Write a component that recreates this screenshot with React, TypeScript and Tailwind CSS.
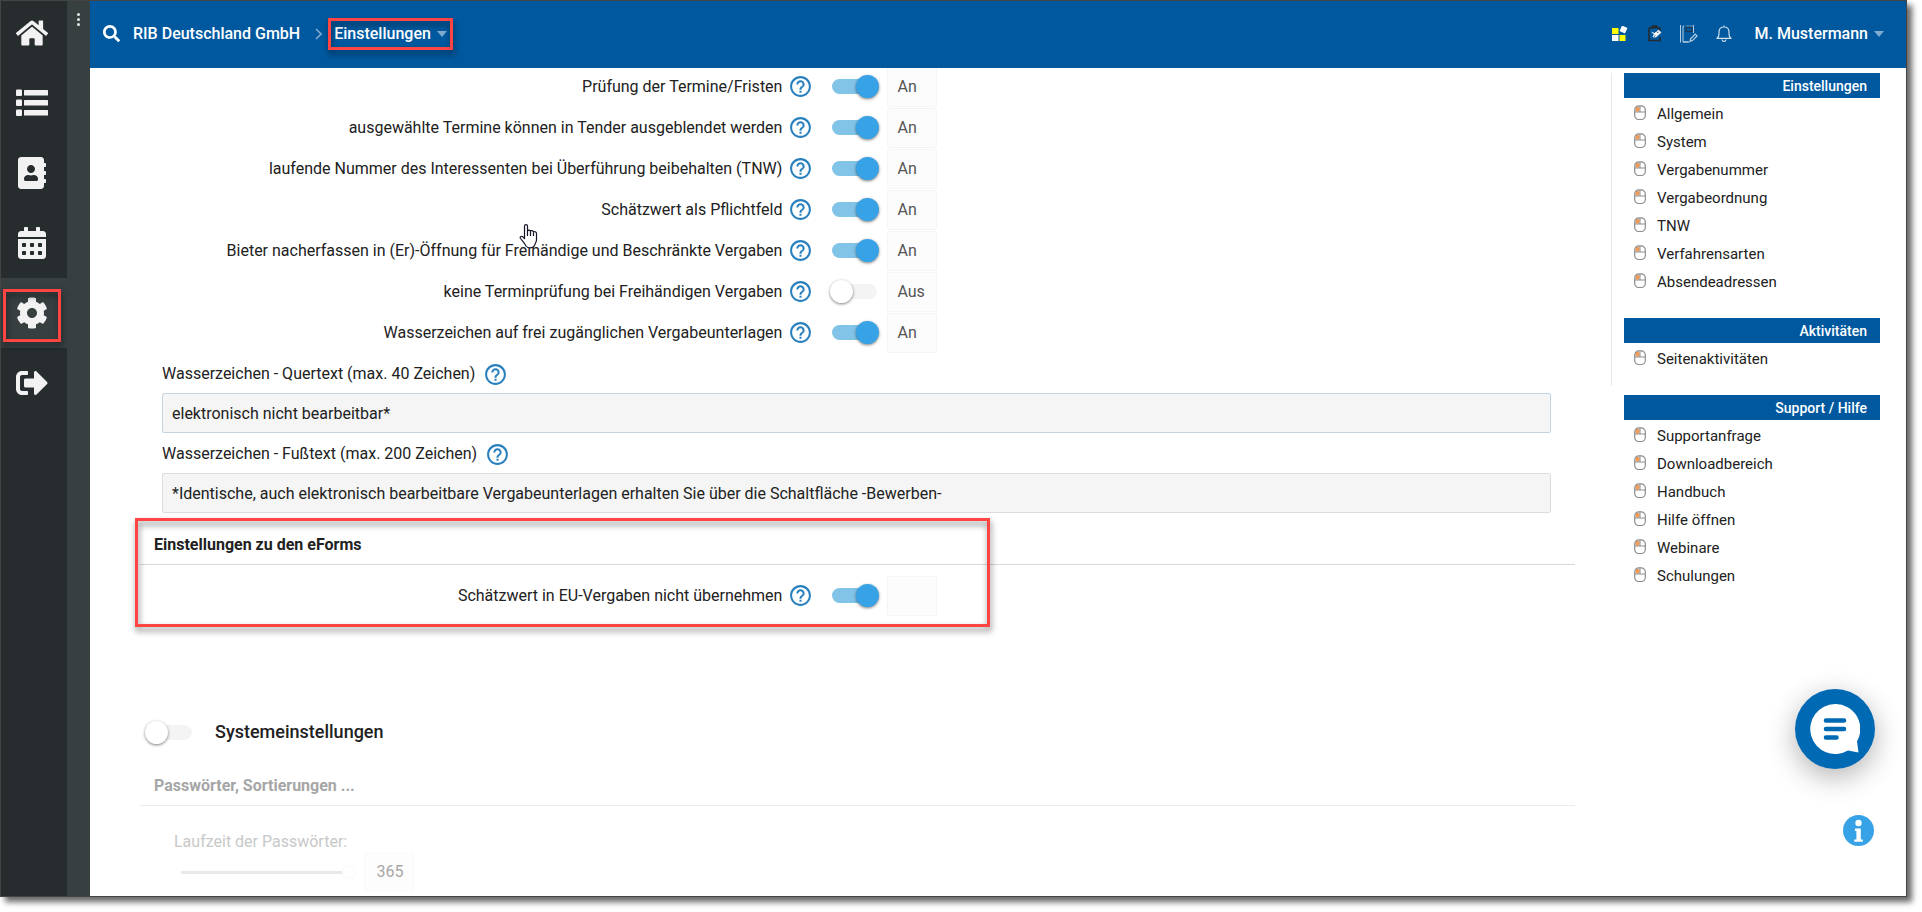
import type { ReactNode } from 'react'
import { FaAddressBook, FaCalendarAlt, FaCog, FaHome, FaSearch, FaSignOutAlt } from 'react-icons/fa'
import { MdHelpOutline } from 'react-icons/md'

type Setting = { id: string; label: string; on: boolean; value: string }

const SETTINGS: Setting[] = [
  { id: 'fristen', label: 'Prüfung der Termine/Fristen', on: true, value: 'An' },
  { id: 'ausblenden', label: 'ausgewählte Termine können in Tender ausgeblendet werden', on: true, value: 'An' },
  { id: 'tnw', label: 'laufende Nummer des Interessenten bei Überführung beibehalten (TNW)', on: true, value: 'An' },
  { id: 'pflicht', label: 'Schätzwert als Pflichtfeld', on: true, value: 'An' },
  { id: 'bieter', label: 'Bieter nacherfassen in (Er)-Öffnung für Freihändige und Beschränkte Vergaben', on: true, value: 'An' },
  { id: 'terminpruefung', label: 'keine Terminprüfung bei Freihändigen Vergaben', on: false, value: 'Aus' },
  { id: 'wasserzeichen', label: 'Wasserzeichen auf frei zugänglichen Vergabeunterlagen', on: true, value: 'An' },
]

const MENU_SETTINGS = ['Allgemein', 'System', 'Vergabenummer', 'Vergabeordnung', 'TNW', 'Verfahrensarten', 'Absendeadressen']
const MENU_SUPPORT = ['Supportanfrage', 'Downloadbereich', 'Handbuch', 'Hilfe öffnen', 'Webinare', 'Schulungen']

function ListIcon() {
  return (
    <svg width="32" height="32" viewBox="0 0 32 32" fill="currentColor">
      {[3, 13, 23].map((y) => (
        <g key={y}>
          <rect x="0" y={y - 0.5} width="6" height="6.5" rx="1" />
          <rect x="8" y={y} width="24" height="5.5" rx="0.5" />
        </g>
      ))}
    </svg>
  )
}

function Caret() {
  return (
    <svg width="10" height="6" viewBox="0 0 10 6" fill="#80aad0">
      <path d="M0 0h10L5 6z" />
    </svg>
  )
}

function MouseIcon() {
  return (
    <svg className="mb-0.5" width="12" height="16" viewBox="0 0 12 16" fill="none" stroke="#8d8d8d">
      <path d="M1.500 2h4v4.500h-4z" fill="#f59a50" stroke="none" />
      <rect x="0.700" y="0.900" width="10.600" height="13.600" rx="4" strokeWidth="1.200" />
      <path d="M.7 7h10.600M6 1v6" />
    </svg>
  )
}

function TilesIcon() {
  return (
    <svg width="16" height="16" viewBox="0 0 16 16">
      <rect x="0" y="2" width="6.500" height="6" fill="#ff0" />
      <rect x="0" y="9" width="6.500" height="6" fill="#fff" />
      <rect x="7.500" y="9" width="6" height="6" fill="#ff0" />
      <rect x="8.500" y="0.500" width="6" height="6" fill="#fff" transform="rotate(25 11.500 3.500)" />
    </svg>
  )
}

function ClipboardIcon() {
  return (
    <svg width="14" height="17" viewBox="0 0 14 17" fill="none">
      <path d="M1 3h2.500l1-2h4l1 2H12v3M12 12v3.500H1V3" fill="none" stroke="#252b33" strokeWidth="1.600" />
      <path d="M4 1h5l.5 2.500h-6z" fill="#252b33" />
      <path d="M3.500 7l2.500 2 1.500-1.500 1 1M5 12l1-2.500L10.500 5 13 7.500 8 12z" fill="#fff" stroke="#fff" strokeWidth="0.600" />
      <path d="M6 11.500l1.500-1M9 8l1.500-1" stroke="#252b33" strokeWidth="0.800" />
    </svg>
  )
}

function JournalIcon() {
  return (
    <svg width="18" height="18" viewBox="0 0 18 18" fill="none" stroke="#b9d0e4">
      <path d="M.5 0v17.500M3 1v16h5.500M3 17h6M3 1h1M13.500 0v8" />
      <rect x="6" y="2.500" width="6" height="4" stroke="#253545" />
      <path d="M5.500 1h8" stroke="#5f93c0" />
      <path d="M10 16.500l.6-2.700 4.600-4.700 1.800 1.800-4.600 4.700z" strokeWidth="1.200" />
    </svg>
  )
}

function BellIcon() {
  return (
    <svg width="16" height="18" viewBox="0 0 16 18" fill="none" stroke="#cfe0ee" strokeWidth="1.200">
      <path d="M8 .5v1.300M1 13.300h14c-1.600-1.200-2-2.600-2-4.300V7c0-3-2-5-5-5S3 4 3 7v2c0 1.700-.4 3.100-2 4.300z" strokeLinejoin="round" />
      <path d="M6 14.500c.2 1.300 1 2 2 2s1.800-.7 2-2" />
    </svg>
  )
}

/* red marker frame laid over the element it highlights */
function Marker({ className }: { className: string }) {
  return <span className={`pointer-events-none absolute border-3 border-[#ff4444] drop-shadow-[1px_4px_3px_rgba(0,0,0,0.5)] ${className}`} />
}

function NavItem({ label, children }: { label: string; children: ReactNode }) {
  return (
    <a href="#" aria-label={label} className="flex h-[70px] items-center justify-center bg-[#272d2f] pr-1 text-[32px] first:h-[67px] first:pb-[3px]">
      {children}
    </a>
  )
}

function Toggle({ id, on }: { id: string; on: boolean }) {
  return (
    <input
      id={id}
      type="checkbox"
      defaultChecked={on}
      className="relative h-[15px] w-[45px] shrink-0 appearance-none rounded-full bg-[#f4f4f4] before:absolute before:-top-1 before:-left-0.5 before:size-[23px] before:rounded-full before:bg-white before:shadow-[0_1px_3px_rgba(0,0,0,0.5)] checked:bg-[#81c4e8] checked:before:left-6 checked:before:bg-[#37a3e6]"
    />
  )
}

function Help() {
  return (
    <button type="button" aria-label="Hilfe" className="shrink-0 text-[#2980be]">
      <MdHelpOutline size={25} />
    </button>
  )
}

function ValueBox({ id, children }: { id?: string; children?: ReactNode }) {
  return (
    <output htmlFor={id} className="flex h-10 w-[50px] items-center rounded-xs border border-[#f5f5f5] bg-[#fcfcfc] pl-[9px] text-[#555]">
      {children}
    </output>
  )
}

function SettingRow({ id, label, on, value }: Setting) {
  return (
    <div className="flex h-[41px] items-center">
      <div className="flex w-[47%] items-center justify-end gap-1.5 pr-px">
        <label htmlFor={id}>{label}</label>
        <Help />
      </div>
      <div className="ml-[18px] flex items-center gap-2.5">
        <Toggle id={id} on={on} />
        <ValueBox id={id}>{value}</ValueBox>
      </div>
    </div>
  )
}

function TextField({ id, label, value, className }: { id: string; label: string; value: string; className: string }) {
  return (
    <div>
      <div className="flex h-10 items-center gap-2 pt-0.5">
        <label htmlFor={id}>{label}</label>
        <Help />
      </div>
      <input id={id} defaultValue={value} className={`block h-10 w-full rounded-xs border bg-[#f5f5f5] px-[9px] ${className}`} />
    </div>
  )
}

function MenuGroup({ title, items }: { title: string; items: string[] }) {
  return (
    <section>
      <h2 className="h-[25px] bg-[#00599f] pr-[13px] text-right text-sm leading-[26px] font-medium text-white">{title}</h2>
      <ul className="pt-0.5">
        {items.map((item) => (
          <li key={item}>
            <a href="#" className="flex h-7 items-center gap-[11px] pl-2.5 text-[15px]">
              <MouseIcon />
              {item}
            </a>
          </li>
        ))}
      </ul>
    </section>
  )
}

export default function App() {
  return (
    <div className="h-screen bg-white pr-[15px] pb-[15px] font-[Roboto,sans-serif] text-base text-[#212121]">
      <div className="relative flex h-full overflow-hidden border border-[#444] bg-white shadow-[5px_5px_6px_rgba(0,0,0,0.6)]">
        <div className="flex shrink-0 bg-[#373f41] text-[#f2f2f2]">
          <nav className="flex w-[66px] flex-col bg-[#272d2f]">
            <NavItem label="Startseite"><FaHome /></NavItem>
            <NavItem label="Liste"><ListIcon /></NavItem>
            <NavItem label="Adressbuch"><FaAddressBook /></NavItem>
            <NavItem label="Kalender"><FaCalendarAlt /></NavItem>
            <a href="#" aria-label="Einstellungen" className="relative flex h-[70px] items-center justify-center bg-[#373f41] pr-1 text-[32px]">
              <FaCog />
              <Marker className="top-[11px] right-[6px] bottom-[6px] left-[2px]" />
            </a>
            <NavItem label="Abmelden"><FaSignOutAlt /></NavItem>
          </nav>
          <button type="button" aria-label="Menü" className="flex w-[23px] flex-col items-center gap-0.5 self-start pt-3">
            <i className="size-[3px] rounded-full bg-[#e8e8e8]" />
            <i className="size-[3px] rounded-full bg-[#e8e8e8]" />
            <i className="size-[3px] rounded-full bg-[#e8e8e8]" />
          </button>
        </div>

        <div className="flex min-w-0 flex-1 flex-col">
          <header className="z-10 flex h-[67px] shrink-0 items-center justify-between bg-[#00599f] pr-[22px] pb-0.5 pl-[13px] font-medium text-white">
            <div className="flex items-center">
              <button type="button" aria-label="Suche"><FaSearch size={17} /></button>
              <a href="#" className="ml-[13px]">RIB Deutschland GmbH</a>
              <svg className="ml-[15px] text-[#7fa9cd]" width="7" height="12" viewBox="0 0 7 12" fill="none" stroke="currentColor" strokeWidth="1.600">
                <path d="M1 1l5 5-5 5" />
              </svg>
              <button type="button" className="relative ml-3 flex items-center gap-1.5">
                Einstellungen
                <Caret />
                <Marker className="-inset-x-1.5 -inset-y-1" />
              </button>
            </div>
            <div className="flex items-center">
              <button type="button" aria-label="Module"><TilesIcon /></button>
              <button type="button" aria-label="Aufgaben" className="ml-5"><ClipboardIcon /></button>
              <button type="button" aria-label="Journal" className="ml-[18px]"><JournalIcon /></button>
              <button type="button" aria-label="Benachrichtigungen" className="ml-[18px]"><BellIcon /></button>
              <button type="button" className="ml-[23px] flex items-center gap-1.5">
                M. Mustermann
                <Caret />
              </button>
            </div>
          </header>

          <div className="flex min-h-0 flex-1 overflow-hidden pl-[50px]">
            <main className="-mt-0.5 mr-9 min-w-0 flex-1">
              {SETTINGS.map((s) => (
                <SettingRow key={s.id} {...s} />
              ))}

              <div className="pr-6 pl-[22px]">
                <TextField id="quertext" label="Wasserzeichen - Quertext (max. 40 Zeichen)" value="elektronisch nicht bearbeitbar*" className="border-[#c3d5e2]" />
                <TextField
                  id="fusstext"
                  label="Wasserzeichen - Fußtext (max. 200 Zeichen)"
                  value="*Identische, auch elektronisch bearbeitbare Vergabeunterlagen erhalten Sie über die Schaltfläche -Bewerben-"
                  className="border-[#dcdcdc]"
                />
              </div>

              <section className="relative pt-[11px]">
                <h3 className="h-[41px] border-b border-[#d8d8d8] pl-3.5 leading-[42px] font-bold">Einstellungen zu den eForms</h3>
                <div className="pt-2.5">
                  <SettingRow id="eu" label="Schätzwert in EU-Vergaben nicht übernehmen" on value="" />
                </div>
                <Marker className="top-[5px] -bottom-[11px] -left-[5px] w-[855px]" />
              </section>

              <section className="mt-24">
                <div className="flex h-10 items-center gap-[23px] pl-[7px]">
                  <Toggle id="system" on={false} />
                  <label htmlFor="system" className="text-lg font-medium">Systemeinstellungen</label>
                </div>
                <h3 className="mt-[13px] h-[41px] border-b border-[#ececec] pl-3.5 leading-[42px] font-bold text-[#a6a6a6]">Passwörter, Sortierungen ...</h3>
                <div className="mt-[26px] pl-[34px]">
                  <label htmlFor="laufzeit" className="block leading-5 text-[#c8c8c8]">Laufzeit der Passwörter:</label>
                  <div className="flex items-center gap-2 pl-[7px]">
                    <input
                      id="laufzeit"
                      type="range"
                      min={0}
                      max={365}
                      defaultValue={365}
                      disabled
                      className="h-[3px] w-[175px] appearance-none bg-[#e9e9e9] [&::-webkit-slider-thumb]:size-3.5 [&::-webkit-slider-thumb]:appearance-none [&::-webkit-slider-thumb]:rounded-full [&::-webkit-slider-thumb]:border [&::-webkit-slider-thumb]:border-[#fafafa] [&::-webkit-slider-thumb]:bg-white"
                    />
                    <output htmlFor="laufzeit" className="flex h-10 w-[50px] items-center justify-center rounded-xs border border-[#fafafa] bg-[#fdfdfd] pl-0.5 text-[#a6a6a6]">
                      365
                    </output>
                  </div>
                </div>
              </section>
            </main>

            <aside className="w-[295px] shrink-0 pt-[5px]">
              <div className="flex flex-col gap-[22px] border-l border-[#e9e9e9] pr-[26px] pb-[13px] pl-3">
                <MenuGroup title="Einstellungen" items={MENU_SETTINGS} />
                <MenuGroup title="Aktivitäten" items={['Seitenaktivitäten']} />
              </div>
              <div className="mt-[9px] pr-[26px] pl-[13px]">
                <MenuGroup title="Support / Hilfe" items={MENU_SUPPORT} />
              </div>
            </aside>
          </div>
        </div>

        <button type="button" aria-label="Chat" className="absolute right-[31px] bottom-[127px] flex size-20 items-center justify-center rounded-full bg-[#0069b4] shadow-[0_8px_28px_rgba(0,0,0,0.3)]">
          <svg width="50" height="50" viewBox="0 0 50 50">
            <path d="M25 0a25 25 0 1 0 13 46.500l10.500 2L47 37.500A25 25 0 0 0 25 0z" fill="#fff" />
            <path d="M16 16.500h18M16 25h18M16 33.500h10.500" stroke="#0069b4" strokeWidth="4.600" strokeLinecap="round" />
          </svg>
        </button>
        <button type="button" aria-label="Information" className="absolute right-8 bottom-[50px]">
          <svg width="31" height="31" viewBox="0 0 31 31">
            <circle cx="15.500" cy="15.500" r="15.500" fill="#37a3e6" />
            <circle cx="15.500" cy="8" r="3.200" fill="#fff" />
            <path d="M12 13.500h5.800v11h2v2.300h-8.600v-2.300h2.200v-8.500H12z" fill="#fff" />
          </svg>
        </button>

        {/* mouse pointer */}
        <svg className="absolute top-[223px] left-[518px]" width="19" height="25" viewBox="0 0 19 25" fill="#fff" stroke="#15152a" strokeWidth="1.200" strokeLinejoin="round">
          <path d="M5.500 14.500V2.200c0-2 3-2 3 0V7c.4-1.300 2.700-1.200 3 .3.600-1.100 2.700-.8 3 .8.700-.9 3-.6 3 1.400V16c0 2-1.500 3.500-2 5.500-1.500 3-7 3-8.500.500-1-2.500-3.500-5-5.500-7.500-1-2 1-3 2.500-1.500z" />
          <path d="M8.500 6.500V12M11.500 7.500V12M14.500 8.500V12" />
        </svg>
      </div>
    </div>
  )
}
